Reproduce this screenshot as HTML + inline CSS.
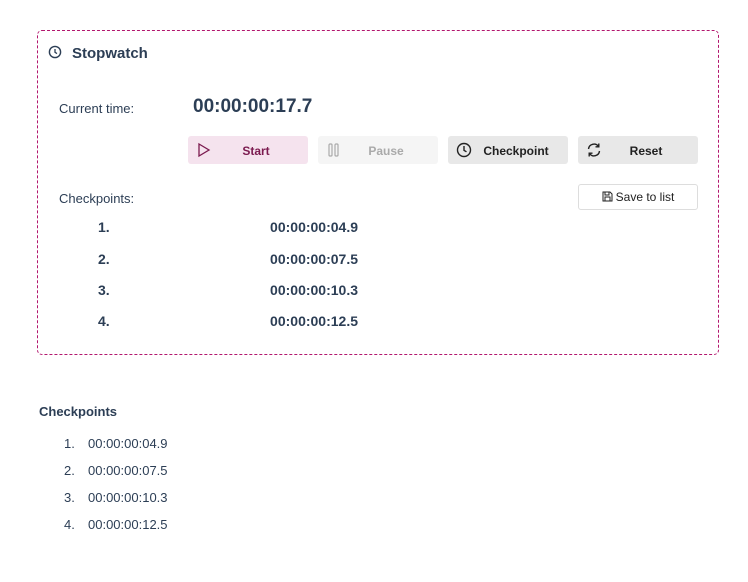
<!DOCTYPE html>
<html><head><meta charset="utf-8"><style>
*{margin:0;padding:0;box-sizing:border-box}
body{width:748px;height:582px;background:#fff;font-family:"Liberation Sans",sans-serif;color:#2c3e55;position:relative;overflow:hidden}
.a{position:absolute;white-space:nowrap}
.box{position:absolute;left:37px;top:30px;width:682px;height:325px;border:1px dashed #b3176e;border-radius:5px}
.btn{position:absolute;top:136px;width:120px;height:28px;border-radius:3px;font-size:12px;font-weight:bold;display:flex;align-items:center}
.btn svg{position:absolute;left:8px;top:6px}
.btn span{position:absolute;left:0;right:0;top:8px;text-align:center;padding-left:16px}
.num{font-size:14px;font-weight:bold}
.t{font-size:14px;font-weight:bold;text-align:right;width:140px}
.li{font-size:13px}
</style></head><body>
<div class="box"></div>
<svg class="a" style="left:48px;top:45px" width="14" height="14" viewBox="0 0 14 14"><circle cx="7" cy="7" r="5.6" fill="none" stroke="#2c3e55" stroke-width="1.4"/><path d="M7 4v3.3l2 1.3" fill="none" stroke="#2c3e55" stroke-width="1.3"/></svg>
<div class="a" style="left:72px;top:45px;font-size:15px;font-weight:bold">Stopwatch</div>
<div class="a" style="left:59px;top:101px;font-size:13px">Current time:</div>
<div class="a" style="left:193px;top:96px;font-size:19px;font-weight:bold">00:00:00:17.7</div>
<div class="btn" style="left:188px;background:#f5e3ee;color:#7b1a4f"><svg width="16" height="16" viewBox="0 0 16 16"><path d="M3 2l10 6-10 6z" fill="none" stroke="#7b1a4f" stroke-width="1.3"/></svg><span>Start</span></div>
<div class="btn" style="left:318px;background:#f5f5f5;color:#aaa"><svg width="16" height="16" viewBox="0 0 16 16"><rect x="3" y="2" width="3" height="12" rx="1" fill="none" stroke="#aaa" stroke-width="1.2"/><rect x="9" y="2" width="3" height="12" rx="1" fill="none" stroke="#aaa" stroke-width="1.2"/></svg><span>Pause</span></div>
<div class="btn" style="left:448px;background:#e8e8e8;color:#222"><svg width="16" height="16" viewBox="0 0 16 16"><circle cx="8" cy="8" r="6.5" fill="none" stroke="#222" stroke-width="1.4"/><path d="M8 4v4.3l2.5 1.5" fill="none" stroke="#222" stroke-width="1.4"/></svg><span>Checkpoint</span></div>
<div class="btn" style="left:578px;background:#e8e8e8;color:#222"><svg width="16" height="16" viewBox="0 0 16 16"><path d="M2.5 7A5.5 5.5 0 0 1 12.5 4.5M13.5 9A5.5 5.5 0 0 1 3.5 11.5" fill="none" stroke="#222" stroke-width="1.4"/><path d="M12.8 1.5v3.3H9.5M3.2 14.5v-3.3h3.3" fill="none" stroke="#222" stroke-width="1.4"/></svg><span>Reset</span></div>
<div class="a" style="left:59px;top:191px;font-size:13px">Checkpoints:</div>
<div class="a" style="left:578px;top:184px;width:120px;height:26px;border:1px solid #ddd;border-radius:3px;font-size:12px;color:#222;text-align:center;line-height:25px"><svg width="11" height="11" viewBox="0 0 11 11" style="vertical-align:-1px;margin-right:3px"><path d="M1 1h7l2 2v7H1z M3 1v3h4V1 M3 10V6h5v4" fill="none" stroke="#222" stroke-width="1"/></svg>Save to list</div>
<div class="a num" style="left:98px;top:219px">1.</div><div class="a t" style="left:218px;top:219px">00:00:00:04.9</div>
<div class="a num" style="left:98px;top:251px">2.</div><div class="a t" style="left:218px;top:251px">00:00:00:07.5</div>
<div class="a num" style="left:98px;top:282px">3.</div><div class="a t" style="left:218px;top:282px">00:00:00:10.3</div>
<div class="a num" style="left:98px;top:313px">4.</div><div class="a t" style="left:218px;top:313px">00:00:00:12.5</div>
<div class="a" style="left:39px;top:404px;font-size:13px;font-weight:bold">Checkpoints</div>
<div class="a li" style="left:64px;top:436px">1.</div><div class="a li" style="left:88px;top:436px">00:00:00:04.9</div>
<div class="a li" style="left:64px;top:463px">2.</div><div class="a li" style="left:88px;top:463px">00:00:00:07.5</div>
<div class="a li" style="left:64px;top:490px">3.</div><div class="a li" style="left:88px;top:490px">00:00:00:10.3</div>
<div class="a li" style="left:64px;top:517px">4.</div><div class="a li" style="left:88px;top:517px">00:00:00:12.5</div>
</body></html>
